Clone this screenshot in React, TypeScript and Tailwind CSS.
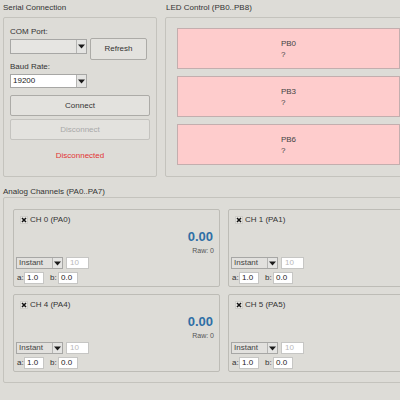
import React from "react";

function Arrow() {
  return (
    <svg width="7" height="5" viewBox="0 0 7 5">
      <path d="M0 0.5h7L3.5 4.5z" fill="#1a1a1a" />
    </svg>
  );
}

function Combo({ className, value, textClass }: { className: string; value?: string; textClass?: string }) {
  return (
    <div className={"flex border border-[#a7a7a5] " + className}>
      <div className={"flex-1 flex items-center pl-[2px] text-[8px] leading-none " + (textClass || "text-[#1a1a1a]")}>{value}</div>
      <div className="w-[10px] border-l border-[#b5b5b3] bg-[#e4e4e2] flex items-center justify-center">
        <Arrow />
      </div>
    </div>
  );
}

function Btn({ className, children }: { className: string; children: React.ReactNode }) {
  return (
    <div className={"flex items-center justify-center border rounded-[2px] bg-[#e3e2de] text-[8px] " + className}>
      {children}
    </div>
  );
}

function Check() {
  return (
    <svg width="8" height="8" viewBox="0 0 8 8">
      <rect x="0.5" y="0.5" width="7" height="7" fill="#e8e7e3" stroke="#cfcec9" />
      <path d="M2 2L6 6M6 2L2 6" stroke="#111" strokeWidth="1.5" />
    </svg>
  );
}

function Channel({ label, showValue }: { label: string; showValue: boolean }) {
  return (
    <div className="w-[207px] h-[78px] border border-[#bdbcb6] rounded-[2px] flex flex-col">
      <div className="mt-[4px] h-[11px] flex items-center pl-[6px] gap-[2px]">
        <Check />
        <span className="text-[8px] leading-none text-[#333]">{label}</span>
      </div>
      <div className="mt-[4px] h-[15px] leading-[15px] text-right pr-[6px] text-[13px] font-bold text-[#2f6fa6]">
        {showValue ? "0.00" : ""}
      </div>
      <div className="mt-[2px] h-[10px] leading-[10px] text-right pr-[5px] text-[7px] text-[#555]">
        {showValue ? "Raw: 0" : ""}
      </div>
      <div className="mt-[1px] h-[12px] flex pl-[2px] gap-[3px]">
        <Combo className="w-[47px] h-[12px] bg-[#e2e1de]" value="Instant" textClass="text-[#444]" />
        <div className="w-[23px] h-[12px] border border-[#c6c6c4] bg-white text-[8px] leading-[10px] pl-[3px] text-[#b8b8b8]">10</div>
      </div>
      <div className="mt-[3px] h-[12px] flex items-center pl-[3px]">
        <span className="w-[7px] text-[8px] leading-none text-[#333]">a:</span>
        <div className="w-[20px] h-[12px] border border-[#c6c6c4] bg-white text-[8px] leading-[10px] pl-[2px] text-[#222]">1.0</div>
        <span className="ml-[6px] w-[8px] text-[8px] leading-none text-[#333]">b:</span>
        <div className="w-[20px] h-[12px] border border-[#c6c6c4] bg-white text-[8px] leading-[10px] pl-[2px] text-[#222]">0.0</div>
      </div>
    </div>
  );
}

function Led({ name }: { name: string }) {
  return (
    <div className="w-[223px] h-[41px] border border-[#c3aeae] bg-[#fecccc] flex items-center justify-center">
      <div className="text-left text-[8px] leading-[11px] text-[#444]">
        <div>{name}</div>
        <div>?</div>
      </div>
    </div>
  );
}

export default function App() {
  return (
    <div className="w-[400px] h-[400px] overflow-hidden bg-[#dddcd7] font-['Liberation_Sans',Arial,sans-serif] text-[#222]">
      <div className="w-[440px] flex flex-col">
        <div className="flex">
          <div className="flex flex-col ml-[3px]">
            <div className="h-[17px] pt-[2px] leading-[12px] text-[8px] text-[#333]">Serial Connection</div>
            <div className="w-[154px] h-[160px] border border-[#c4c3bd] rounded-[2px] flex flex-col pl-[6px]">
              <div className="mt-[8px] h-[12px] leading-[12px] text-[8px] text-[#333]">COM Port:</div>
              <div className="flex items-start h-[22px]">
                <Combo className="mt-[1px] w-[77px] h-[15px] bg-[#e6e5e2]" />
                <Btn className="ml-[3px] w-[57px] h-[22px] border-[#acaba7] text-[#333]">Refresh</Btn>
              </div>
              <div className="mt-[1px] h-[12px] leading-[12px] text-[8px] text-[#333]">Baud Rate:</div>
              <Combo className="mt-[1px] w-[77px] h-[14px] bg-white" value="19200" />
              <Btn className="mt-[7px] w-[140px] h-[21px] border-[#acaba7] text-[#333]">Connect</Btn>
              <Btn className="mt-[3px] w-[140px] h-[21px] border-[#c4c3bf] text-[#a9a9a9]">Disconnect</Btn>
              <div className="mt-[10px] w-[140px] h-[12px] leading-[12px] text-center text-[8px] text-[#e23434]">Disconnected</div>
            </div>
          </div>
          <div className="flex flex-col ml-[8px]">
            <div className="h-[17px] pt-[2px] pl-[1px] leading-[12px] text-[8px] text-[#333]">LED Control (PB0..PB8)</div>
            <div className="w-[247px] h-[160px] border border-[#c4c3bd] rounded-[2px] flex flex-col pl-[11px] pt-[10px] gap-[7px]">
              <Led name="PB0" />
              <Led name="PB3" />
              <Led name="PB6" />
            </div>
          </div>
        </div>
        <div className="ml-[3px] h-[20px] pt-[9px] leading-[12px] text-[8px] text-[#333]">Analog Channels (PA0..PA7)</div>
        <div className="ml-[3px] w-[437px] h-[186px] border border-[#c4c3bd] rounded-[2px] pl-[9px] pt-[11px]">
          <div className="grid grid-cols-[207px_207px] gap-x-[8px] gap-y-[7px]">
            <Channel label="CH 0 (PA0)" showValue={true} />
            <Channel label="CH 1 (PA1)" showValue={false} />
            <Channel label="CH 4 (PA4)" showValue={true} />
            <Channel label="CH 5 (PA5)" showValue={false} />
          </div>
        </div>
      </div>
    </div>
  );
}
